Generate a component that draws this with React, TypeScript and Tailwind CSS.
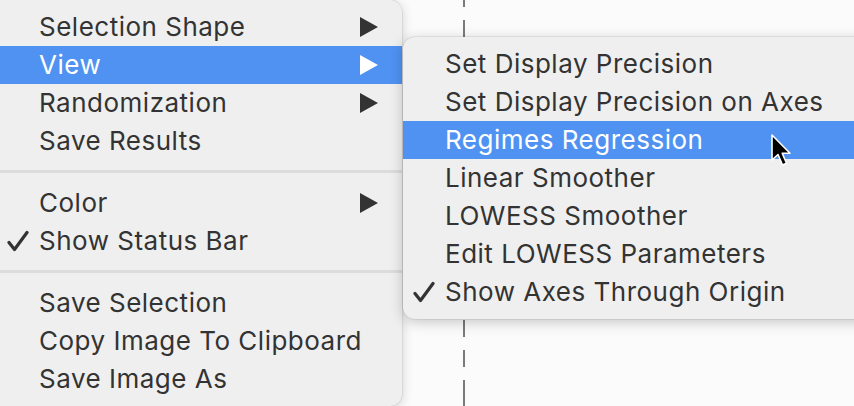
import React from 'react'

type Item = { label: string; arrow?: boolean; checked?: boolean; active?: boolean } | 'sep'

const mainItems: Item[] = [
  { label: 'Selection Shape', arrow: true },
  { label: 'View', arrow: true, active: true },
  { label: 'Randomization', arrow: true },
  { label: 'Save Results' },
  'sep',
  { label: 'Color', arrow: true },
  { label: 'Show Status Bar', checked: true },
  'sep',
  { label: 'Save Selection' },
  { label: 'Copy Image To Clipboard' },
  { label: 'Save Image As' },
]

const subItems: Item[] = [
  { label: 'Set Display Precision' },
  { label: 'Set Display Precision on Axes' },
  { label: 'Regimes Regression', active: true },
  { label: 'Linear Smoother' },
  { label: 'LOWESS Smoother' },
  { label: 'Edit LOWESS Parameters' },
  { label: 'Show Axes Through Origin', checked: true },
]

const Check = ({ active }: { active?: boolean }) => (
  <svg width="22" height="22" viewBox="0 0 22 22" className="shrink-0">
    <path
      d="M2 12.5 L7.5 19.5 L20 2.5"
      fill="none"
      stroke={active ? '#fff' : '#333'}
      strokeWidth="3.2"
      strokeLinecap="round"
      strokeLinejoin="round"
    />
  </svg>
)

const Arrow = ({ active }: { active?: boolean }) => (
  <svg width="18" height="20" viewBox="0 0 18 20" className="shrink-0">
    <path d="M0 0 L18 10 L0 20 Z" fill={active ? '#fff' : '#333'} />
  </svg>
)

const Cursor = () => (
  <svg width="24" height="36" viewBox="0 0 24 36" className="absolute left-[770px] top-[133px]">
    <path
      d="M2 2 L2 27 L8 21.5 L12.5 32 L16.5 30.3 L12.2 20.3 L20 20.3 Z"
      fill="#000"
      stroke="#fff"
      strokeWidth="1.6"
      strokeLinejoin="round"
    />
  </svg>
)

function MenuList({ items, checkW }: { items: Item[]; checkW: string }) {
  return (
    <>
      {items.map((it, i) =>
        it === 'sep' ? (
          <div key={i} className="pt-[10px] pb-[11px]">
            <div className="h-[3px] bg-[#dcdcdc]" />
          </div>
        ) : (
          <div
            key={i}
            className={`flex h-[38px] items-center pr-[24px] ${
              it.active ? 'bg-[#4f92f2] text-white' : 'text-[#333]'
            }`}
          >
            <div className={`flex ${checkW} shrink-0 justify-end pr-[10px]`}>
              {it.checked && <Check active={it.active} />}
            </div>
            <span className="flex-1 whitespace-nowrap">{it.label}</span>
            {it.arrow && <Arrow active={it.active} />}
          </div>
        )
      )}
    </>
  )
}

export default function App() {
  return (
    <div
      className="relative h-[406px] w-[854px] overflow-hidden bg-[#fbfbfb] text-[26px] leading-none tracking-[0.5px]"
      style={{ fontFamily: 'Inter, "Noto Sans", sans-serif' }}
    >
      {/* dashed guide line */}
      <div
        className="absolute left-[463px] top-0 h-full w-[2px]"
        style={{
          backgroundImage: 'repeating-linear-gradient(to bottom, #7a7a7a 0px, #7a7a7a 17px, transparent 17px, transparent 30px)',
          backgroundPosition: '0 -10px',
        }}
      />

      {/* main menu */}
      <div className="absolute -left-[20px] top-0 w-[422px] rounded-[12px] bg-[#efefef] py-[8px] shadow-[0_2px_12px_rgba(0,0,0,0.18),0_0_0_0.5px_rgba(0,0,0,0.12)]">
        <MenuList items={mainItems} checkW="w-[59px]" />
      </div>

      {/* submenu */}
      <div className="absolute left-[403px] top-[37px] w-[480px] rounded-[12px] bg-[#efefef] py-[8px] shadow-[0_3px_14px_rgba(0,0,0,0.22),0_0_0_0.5px_rgba(0,0,0,0.12)]">
        <MenuList items={subItems} checkW="w-[42px]" />
      </div>

      <Cursor />
    </div>
  )
}
